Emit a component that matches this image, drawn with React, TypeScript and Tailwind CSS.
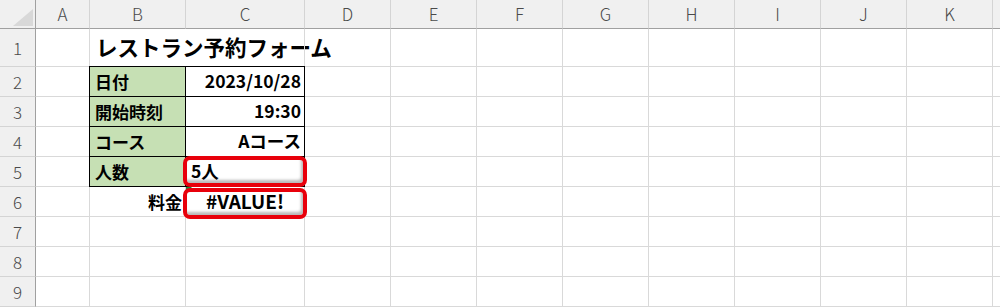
import React from "react";

const cols = ["A", "B", "C", "D", "E", "F", "G", "H", "I", "J", "K", ""];
const widths = [54, 96, 119, 86, 86, 86, 86, 86, 86, 86, 86, 86];
const rowHeights = [38, 30, 30, 30, 30, 30, 30, 30, 30];

const font = { fontFamily: '"Noto Sans CJK JP", "Noto Sans", sans-serif' };

function cellContent(r: number, c: number): { node?: React.ReactNode; cls: string } {
  const base = "border-r border-b border-[#d9d9d9]";
  const tblB = "bg-[#c6e0b4] border border-black -ml-px -mt-px";
  const tblC = "bg-white border border-black -ml-px -mt-px";
  if (r === 1 && c === 1) {
    return {
      node: (
        <span className="absolute left-[6px] top-0 h-full flex items-center whitespace-nowrap text-[21.5px] font-bold text-black">
          レストラン予約フォーム
        </span>
      ),
      cls: "border-b border-[#d9d9d9]",
    };
  }
  const labels: Record<number, string> = { 2: "日付", 3: "開始時刻", 4: "コース", 5: "人数" };
  const values: Record<number, string> = { 2: "2023/10/28", 3: "19:30", 4: "Aコース" };
  if (r >= 2 && r <= 5 && c === 1) {
    return {
      node: <span className="pl-[5px] text-[17px] font-bold text-black">{labels[r]}</span>,
      cls: `${tblB} flex items-center`,
    };
  }
  if (r >= 2 && r <= 4 && c === 2) {
    return {
      node: <span className="pr-[3px] text-[17.5px] font-bold text-black">{values[r]}</span>,
      cls: `${tblC} flex items-center justify-end`,
    };
  }
  if (r === 5 && c === 2) {
    return {
      node: <span className="pl-[5px] text-[17.5px] font-bold text-black">5人</span>,
      cls: `${tblC} flex items-center`,
    };
  }
  if (r === 6 && c === 1) {
    return {
      node: <span className="pr-[3px] text-[17px] font-bold text-black">料金</span>,
      cls: `${base} flex items-center justify-end`,
    };
  }
  if (r === 6 && c === 2) {
    return {
      node: (
        <>
          <span className="absolute left-0 top-0 w-0 h-0 border-t-[6px] border-t-[#1f8a3a] border-r-[6px] border-r-transparent" />
          <span className="text-[19px] font-bold text-black">#VALUE!</span>
        </>
      ),
      cls: `${base} flex items-center justify-center`,
    };
  }
  return { cls: base };
}

export default function App() {
  const gridCols = `36px ${widths.map((w) => w + "px").join(" ")}`;
  return (
    <div className="relative w-[1000px] h-[308px] overflow-hidden bg-white" style={font}>
      <div
        className="grid"
        style={{
          gridTemplateColumns: gridCols,
          gridTemplateRows: `29px ${rowHeights.map((h) => h + "px").join(" ")}`,
        }}
      >
        <div className="relative bg-[#f0f0f0] border-r border-b border-[#a0a0a0]">
          <svg className="absolute left-[12px] top-[9px]" width="22" height="18" viewBox="0 0 22 18">
            <polygon points="21,0 21,17 1,17" fill="#d8d8d8" />
          </svg>
        </div>
        {cols.map((c, i) => (
          <div
            key={"h" + i}
            className="bg-[#f0f0f0] border-r border-[#d4d4d4] border-b border-b-[#a0a0a0] flex items-center justify-center text-[17px] text-[#4a4a4a] font-light"
          >
            {c}
          </div>
        ))}
        {rowHeights.map((_, ri) => {
          const r = ri + 1;
          return (
            <React.Fragment key={"r" + r}>
              <div className="bg-[#f0f0f0] border-r border-r-[#a0a0a0] border-b border-[#d4d4d4] flex items-center justify-center text-[17px] text-[#4a4a4a] font-light">
                {r}
              </div>
              {cols.map((_, ci) => {
                const { node, cls } = cellContent(r, ci);
                return (
                  <div key={"c" + r + "-" + ci} className={`relative ${cls}`}>
                    {node}
                  </div>
                );
              })}
            </React.Fragment>
          );
        })}
      </div>
      <div className="absolute left-[183px] top-[156px] w-[124px] h-[31px] rounded-[7px] border-[4px] border-[#e8000b] shadow-[inset_-2px_-3px_3px_rgba(0,0,0,0.28)]" />
      <div className="absolute left-[183px] top-[188px] w-[124px] h-[31px] rounded-[7px] border-[4px] border-[#e8000b] shadow-[inset_-2px_-3px_3px_rgba(0,0,0,0.28)]" />
    </div>
  );
}
